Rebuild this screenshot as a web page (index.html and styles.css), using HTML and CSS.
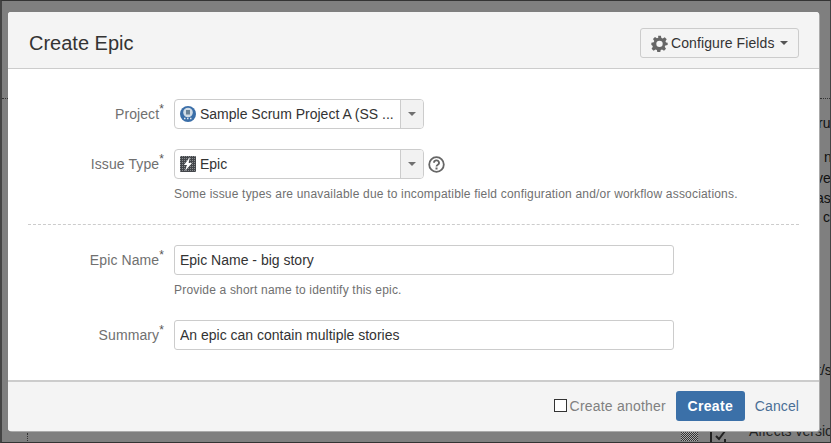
FILE: index.html
```html
<!DOCTYPE html>
<html lang="en">
<head>
  <meta charset="UTF-8" />
  <title>Create Epic</title>
  <link rel="stylesheet" href="styles.css">
</head>
<body>

<!-- bits of the page behind the dialog -->
<div class="behind">
  <span class="bit" style="left:816px;top:114px">ru</span>
  <span class="bit" style="left:822px;top:148px">n</span>
  <span class="bit" style="left:814px;top:169px">ve</span>
  <span class="bit" style="left:814px;top:189px">as</span>
  <span class="bit" style="left:821px;top:208px">c</span>
  <span class="bit" style="left:815px;top:361px">t/s</span>
  <span class="bit bit-last" style="left:747px;top:422px">Affects versio</span>
  <span class="dots" style="left:25px;top:432px"></span>
  <span class="dots-h" style="left:0;top:97px"></span>
  <span class="dots-h" style="left:818px;top:97px"></span>
  <span class="dither"></span>
  <svg class="bit-check" width="18" height="13" viewBox="0 0 18 13"><path d="M1 12V1h11M15 1L9 9 6 6M15 9v4" fill="none" stroke="#222" stroke-width="2"/></svg>
</div>

<div class="dialog">
  <header class="dialog-head">
    <h2>Create Epic</h2>
    <button class="config-btn">
      <svg width="17" height="17" viewBox="0 0 24 24"><path fill="#666" fill-rule="evenodd" d="M10 1h4l.7 3.200 1.900.8 2.800-1.800 2.800 2.800-1.800 2.800.8 1.900L23.500 11v3l-3.300.7-.8 1.900 1.800 2.800-2.800 2.800-2.800-1.800-1.900.8-.7 3.300h-4l-.7-3.300-1.900-.8-2.800 1.800-2.800-2.800 1.800-2.800-.8-1.900L.5 14v-3l3.300-.7.8-1.900-1.800-2.800 2.800-2.800 2.800 1.800 1.900-.8zM12 8a4.500 4.500 0 1 0 0 9 4.500 4.500 0 0 0 0-9z"/></svg>
      <span class="config-text">Configure Fields</span>
      <span class="caret"></span>
    </button>
  </header>

  <div class="dialog-body">
    <div class="field">
      <label>Project<sup>*</sup></label>
      <div class="select">
        <span class="select-val">
          <svg width="16" height="16" viewBox="0 0 16 16"><circle cx="8" cy="8" r="8" fill="#3a6ea8"/><circle cx="8" cy="6.500" r="4.800" fill="#cfdbe6"/><rect x="6" y="4" width="4" height="4.500" fill="#6a8296"/><path d="M4 12.500h8" stroke="#dde6ee" stroke-width="1.500" stroke-dasharray="1.500 1.500"/></svg>
          <span class="select-text">Sample Scrum Project A (SS ...</span>
        </span>
        <span class="select-arrow"><span class="caret"></span></span>
      </div>
    </div>

    <div class="field field-issue">
      <label>Issue Type<sup>*</sup></label>
      <div>
        <div class="select-row">
          <div class="select">
            <span class="select-val">
              <svg width="16" height="16" viewBox="0 0 16 16"><defs><pattern id="dith" width="2" height="2" patternUnits="userSpaceOnUse"><rect width="2" height="2" fill="#44474b"/><rect width="1" height="1" fill="#8a8d91"/></pattern></defs><rect width="16" height="16" rx="1" fill="url(#dith)"/><path d="M10 1L4 9h3l-2 6 7-8H8.500z" fill="#fff"/></svg>
              <span class="select-text">Epic</span>
            </span>
            <span class="select-arrow"><span class="caret"></span></span>
          </div>
          <svg class="help" width="17" height="17" viewBox="0 0 17 17"><circle cx="8.500" cy="8.500" r="7.300" fill="none" stroke="#666" stroke-width="1.800"/><path d="M6 6.800a2.500 2.300 0 1 1 3.800 1.900c-.9.500-1.300.9-1.300 1.900" fill="none" stroke="#666" stroke-width="1.800"/><rect x="7.500" y="11.500" width="2" height="2" fill="#666"/></svg>
        </div>
        <p class="hint">Some issue types are unavailable due to incompatible field configuration and/or workflow associations.</p>
      </div>
    </div>

    <hr class="divider">

    <div class="field field-name">
      <label>Epic Name<sup>*</sup></label>
      <div>
        <input class="text-input" type="text" value="Epic Name - big story">
        <p class="hint">Provide a short name to identify this epic.</p>
      </div>
    </div>

    <div class="field field-summary">
      <label>Summary<sup>*</sup></label>
      <input class="text-input" type="text" value="An epic can contain multiple stories">
    </div>
  </div>

  <footer class="dialog-foot">
    <label class="another"><span class="checkbox"></span>Create another</label>
    <button class="create-btn">Create</button>
    <a class="cancel">Cancel</a>
  </footer>
</div>

</body>
</html>
```

FILE: styles.css
```css
html, body {
  margin: 0;
  height: 443px;
  overflow: hidden;
}

body {
  font-family: "Liberation Sans", Arial, sans-serif;
  font-size: 14px;
  color: #333;
  background-color: #7f7f7f;
  padding: 12px 0 0 8px;
  box-sizing: border-box;
  border-top: 1px solid #333;
  border-left: 2px solid #444;
  border-right: 1px solid #444;
  border-bottom: 1px solid #333;
  position: relative;
}

.behind {
  position: absolute;
  inset: 0;
  overflow: hidden;
}

.bit {
  position: absolute;
  color: #111;
  font-size: 14px;
  line-height: 16px;
  white-space: nowrap;
}

.bit-last {
  color: #222;
}

.bit-check {
  position: absolute;
  left: 708px;
  top: 429px;
}

.dither {
  position: absolute;
  left: 679px;
  top: 430px;
  width: 17px;
  height: 10px;
  background: repeating-conic-gradient(#333 0 25%, #aaa 0 50%) 0 0 / 2px 2px;
}

.dots {
  position: absolute;
  height: 8px;
  border-left: 1px dotted #333;
}

.dots-h {
  position: absolute;
  width: 10px;
  border-top: 1px dotted #333;
}

.dialog {
  position: relative;
  width: 811px;
  height: 419px;
  margin-top: -1px;
  margin-left: -2px;
  background-color: #fff;
  border-radius: 3px;
  display: flex;
  flex-direction: column;
  box-shadow: 1px 1px 0 #aaa;
}

.dialog-head {
  height: 57px;
  box-sizing: border-box;
  background-color: #f4f4f4;
  border-bottom: 1px solid #ccc;
  display: flex;
  align-items: center;
  justify-content: space-between;
  padding: 6px 20px 0 21px;
  border-radius: 3px 3px 0 0;
}

.dialog-head h2 {
  margin: 0;
  font-size: 20px;
  font-weight: normal;
  color: #333;
}

.config-btn {
  height: 30px;
  width: 159px;
  font-family: inherit;
  font-size: 14px;
  color: #333;
  background-color: #f4f4f4;
  border: 1px solid #ccc;
  border-radius: 3px;
  display: flex;
  align-items: center;
  gap: 3px;
  padding: 0 0 0 10px;
}

.config-text {
  letter-spacing: .1px;
}

.caret {
  display: inline-block;
  width: 0;
  height: 0;
  border-left: 4px solid transparent;
  border-right: 4px solid transparent;
  border-top: 4px solid #555;
  margin-left: 2px;
}

.dialog-body {
  flex: 1;
  padding-top: 30px;
}

.field {
  display: flex;
  align-items: flex-start;
}

.field label {
  width: 156px;
  flex: none;
  margin-right: 10px;
  text-align: right;
  letter-spacing: .1px;
  color: #707070;
  line-height: 30px;
}

sup {
  font-size: 12px;
  line-height: 0;
  vertical-align: 6px;
  color: #555;
}

.select {
  width: 250px;
  height: 30px;
  box-sizing: border-box;
  border: 1px solid #ccc;
  border-radius: 4px;
  display: flex;
  background-color: #fff;
}

.select-val {
  flex: 1;
  display: flex;
  align-items: center;
  gap: 4px;
  padding-left: 5px;
  white-space: nowrap;
  overflow: hidden;
}

.select-arrow {
  width: 22px;
  background-color: #f2f2f2;
  border-left: 1px solid #ccc;
  border-radius: 0 3px 3px 0;
  display: flex;
  align-items: center;
  justify-content: center;
}

.select-arrow .caret {
  margin: 0;
  border-top-color: #707070;
}

.select-row {
  display: flex;
  align-items: center;
  gap: 4px;
}

.field-issue {
  margin-top: 20px;
}

.hint {
  margin: 7px 0 0;
  font-size: 12px;
  line-height: 16px;
  letter-spacing: .19px;
  color: #707070;
}

.divider {
  border: none;
  border-top: 1px dashed #ccc;
  margin: 22px 20px 0;
}

.field-name {
  margin-top: 20px;
}

.field-summary {
  margin-top: 22px;
}

.text-input {
  display: block;
  width: 500px;
  height: 30px;
  box-sizing: border-box;
  border: 1px solid #ccc;
  border-radius: 3px;
  padding: 0 5px;
  font-family: inherit;
  font-size: 14px;
  color: #333;
  outline: none;
}

.dialog-foot {
  height: 51px;
  box-sizing: border-box;
  background-color: #f4f4f4;
  border-top: 2px solid #ccc;
  display: flex;
  align-items: center;
  justify-content: flex-end;
  padding: 0 20px 2px 0;
  border-radius: 0 0 3px 3px;
}

.another {
  display: flex;
  align-items: center;
  gap: 3px;
  letter-spacing: .2px;
  color: #808080;
  margin-right: 10px;
}

.checkbox {
  width: 11px;
  height: 11px;
  border: 1px solid #333;
  background-color: #fff;
}

.create-btn {
  width: 69px;
  height: 30px;
  border: none;
  border-radius: 3px;
  background-color: #3b70a8;
  color: #fff;
  font-family: inherit;
  font-size: 14px;
  font-weight: bold;
  letter-spacing: .3px;
  padding: 0;
}

.cancel {
  margin-left: 10px;
  letter-spacing: .1px;
  color: #4a6f96;
}
```
